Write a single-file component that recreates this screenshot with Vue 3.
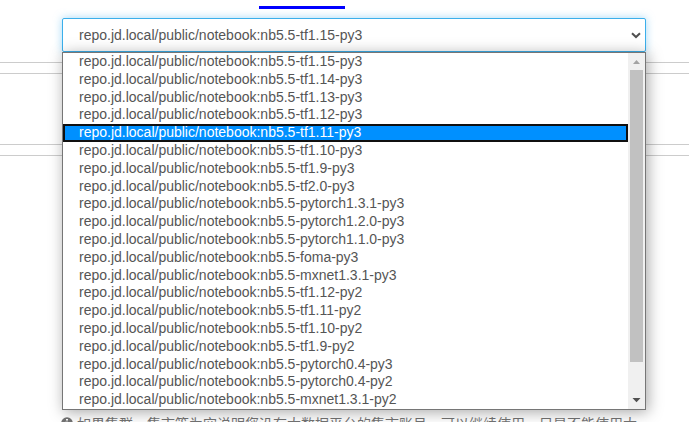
<script setup>
const images = [
  'tf1.15-py3', 'tf1.14-py3', 'tf1.13-py3', 'tf1.12-py3', 'tf1.11-py3',
  'tf1.10-py3', 'tf1.9-py3', 'tf2.0-py3', 'pytorch1.3.1-py3', 'pytorch1.2.0-py3',
  'pytorch1.1.0-py3', 'foma-py3', 'mxnet1.3.1-py3', 'tf1.12-py2', 'tf1.11-py2',
  'tf1.10-py2', 'tf1.9-py2', 'pytorch0.4-py3', 'pytorch0.4-py2', 'mxnet1.3.1-py2',
].map((tag) => `repo.jd.local/public/notebook:nb5.5-${tag}`)
const selected = images[0]
const highlighted = images[4]
</script>

<template>
  <main class="page">
    <div class="tab-marker"></div>
    <div class="select">
      <span>{{ selected }}</span>
      <svg class="chevron" width="10" height="7" viewBox="0 0 10 7">
        <path d="M1 1.2 L5 5 L9 1.2" fill="none" stroke="#505050" stroke-width="2" />
      </svg>
    </div>
    <div class="form">
      <div class="panel first"></div>
      <div class="panel second"></div>
    </div>
    <p class="hint">
      <svg width="12" height="12" viewBox="0 0 12 12">
        <circle cx="6" cy="6" r="5.8" fill="#737373" />
        <path d="M5 2h2v1.6H5z M4.3 4.8H7v3.7h.8V10H4.2V8.5H5V6.2h-.7z" fill="#fff" />
      </svg>
      <span>如果集群、集市等为空说明您没有大数据平台的集市账号，可以继续使用，只是不能使用大</span>
    </p>
    <div class="popup">
      <ul class="options">
        <li v-for="image in images" :key="image" :class="{ active: image === highlighted }">{{ image }}</li>
      </ul>
      <div class="scrollbar">
        <svg class="up" width="15" height="17" viewBox="0 0 15 17">
          <path d="M4 11 L7.5 7 L11 11z" fill="#a3a3a3" />
        </svg>
        <div class="thumb"></div>
        <svg class="down" width="15" height="17" viewBox="0 0 15 17">
          <path d="M3.5 6 L7.5 10.3 L11.5 6z" fill="#505050" />
        </svg>
      </div>
    </div>
  </main>
</template>

<style>
body {
  margin: 0;
  background: #fff;
  overflow: hidden;
}
</style>

<style scoped>
.page {
  position: relative;
  box-sizing: border-box;
  height: 422px;
  padding-top: 6px;
  overflow: hidden;
  font-family: "Liberation Sans", "Noto Sans CJK SC", sans-serif;
  font-size: 14px;
  color: #555;
}
.tab-marker {
  width: 86px;
  height: 3px;
  margin-left: 259px;
  background: #00f;
}
.select {
  position: relative;
  z-index: 1;
  box-sizing: border-box;
  display: flex;
  align-items: center;
  justify-content: space-between;
  width: 584px;
  height: 34px;
  margin: 9px 0 0 62px;
  padding: 0 4px 0 16px;
  border: 1px solid #3bafeb;
  border-radius: 2px;
  background: #fff;
  box-shadow: 0 0 8px rgba(102, 190, 240, 0.6);
}
.form {
  display: flex;
  flex-direction: column;
  gap: 10px;
  padding-top: 10px;
}
.panel {
  box-sizing: border-box;
  border: solid #ccc;
  border-width: 1px 0;
}
.first {
  height: 1px;
  border-bottom: 0;
}
.second {
  height: 72px;
}
.form::after {
  content: "";
  height: 1px;
  background: #ccc;
}
.hint {
  display: flex;
  align-items: flex-start;
  gap: 4px;
  margin: 257px 0 0 61px;
  line-height: 20px;
  white-space: nowrap;
  color: #737373;
}
.hint svg {
  margin-top: 4px;
}
.hint span {
  padding-top: 1px;
}
.popup {
  position: absolute;
  z-index: 2;
  top: 52px;
  left: 62px;
  box-sizing: border-box;
  display: flex;
  width: 584px;
  height: 358px;
  border: 1px solid #767676;
  background: #fff;
  box-shadow: 2px 2px 14px rgba(0, 0, 0, 0.35);
}
.options {
  flex: 1;
  margin: 0;
  padding: 0;
  list-style: none;
}
.options li {
  box-sizing: border-box;
  height: 17.8px;
  padding-left: 16px;
  line-height: 17.8px;
  white-space: nowrap;
}
.options .active {
  padding-left: 14px;
  border: 2px solid #101010;
  background: #0090ff;
  color: #fff;
  line-height: 13.8px;
}
.scrollbar {
  display: flex;
  flex-direction: column;
  width: 17px;
  background: #f0f0f0;
}
.scrollbar svg {
  flex: none;
  margin-left: 1px;
}
.thumb {
  width: 13px;
  height: 292px;
  margin-left: 2px;
  background: #c1c1c1;
}
.down {
  margin-top: auto;
}
</style>
